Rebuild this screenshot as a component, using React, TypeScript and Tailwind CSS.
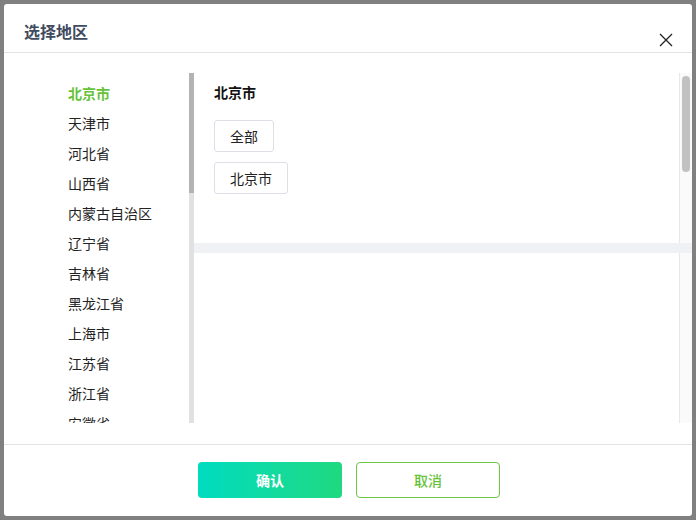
import React, { useState } from "react";

const provinces = [
  "北京市",
  "天津市",
  "河北省",
  "山西省",
  "内蒙古自治区",
  "辽宁省",
  "吉林省",
  "黑龙江省",
  "上海市",
  "江苏省",
  "浙江省",
  "安徽省",
];

export default function App() {
  const [active, setActive] = useState("北京市");

  return (
    <div
      className="w-[696px] h-[520px] bg-[#808080] p-1"
      style={{ fontFamily: '"Noto Sans CJK SC", "Noto Sans", sans-serif' }}
    >
      <div className="w-[688px] h-[512px] bg-white rounded-[3px] flex flex-col">
        {/* header */}
        <div className="relative h-[49px] border-b border-[#e4e4e4] pl-5 pt-[15px] shrink-0">
          <h2 className="text-base leading-6 font-bold text-[#3f4b5e]">选择地区</h2>
          <button className="absolute right-[19px] top-[29px] w-[14px] h-[14px] text-[#222]">
            <svg viewBox="0 0 14 14" width="14" height="14" fill="none" stroke="currentColor" strokeWidth="1.3">
              <path d="M1 1 L13 13 M13 1 L1 13" />
            </svg>
          </button>
        </div>

        {/* body */}
        <div className="flex py-5 h-[391px] shrink-0">
          <div className="w-[185px] h-[350px] overflow-hidden pl-16 pt-[5px]">
            {provinces.map((p) => (
              <div
                key={p}
                onClick={() => setActive(p)}
                className={
                  p === active
                    ? "h-[30px] leading-[30px] text-sm font-semibold text-[#67c23a] cursor-pointer"
                    : "h-[30px] leading-[30px] text-sm text-[#222] cursor-pointer"
                }
              >
                {p}
              </div>
            ))}
          </div>
          <div className="w-[5px] h-[350px] bg-[#e1e1e1] flex flex-col">
            <div className="h-[120px] bg-[#b3b3b3]" />
          </div>

          <div className="flex-1 flex flex-col">
            <div className="flex h-[170px]">
              <div className="flex-1 pl-5 pt-[9px]">
                <div className="text-sm leading-5 font-bold text-[#111]">{active}</div>
                <div className="mt-[18px] flex flex-col items-start gap-[10px]">
                  {["全部", active].map((c) => (
                    <button
                      key={c}
                      className="h-8 px-[15px] border border-[#dcdfe6] rounded-[3px] text-sm text-[#222] bg-white"
                    >
                      {c}
                    </button>
                  ))}
                </div>
              </div>
              <div className="w-[13px] border-l border-[#e8e8e8] bg-[#fafafa] pt-[3px] pl-[2px]">
                <div className="w-[8px] h-[96px] rounded-full bg-[#c1c1c1]" />
              </div>
            </div>
            <div className="h-[10px] bg-[#f0f1f5]" />
            <div className="flex h-[170px]">
              <div className="flex-1" />
              <div className="w-[13px] border-l border-[#e8e8e8] bg-[#fafafa]" />
            </div>
          </div>
        </div>

        {/* footer */}
        <div className="border-t border-[#e4e4e4] flex-1 flex justify-center items-start pt-[17px] pl-[2px] gap-[14px]">
          <button className="w-[144px] h-9 rounded-[4px] bg-gradient-to-r from-[#00dcbf] to-[#1fd97f] text-white text-sm font-semibold">
            确认
          </button>
          <button className="w-[144px] h-9 rounded-[4px] border border-[#6cc644] bg-white text-[#67c23a] text-sm font-medium">
            取消
          </button>
        </div>
      </div>
    </div>
  );
}
